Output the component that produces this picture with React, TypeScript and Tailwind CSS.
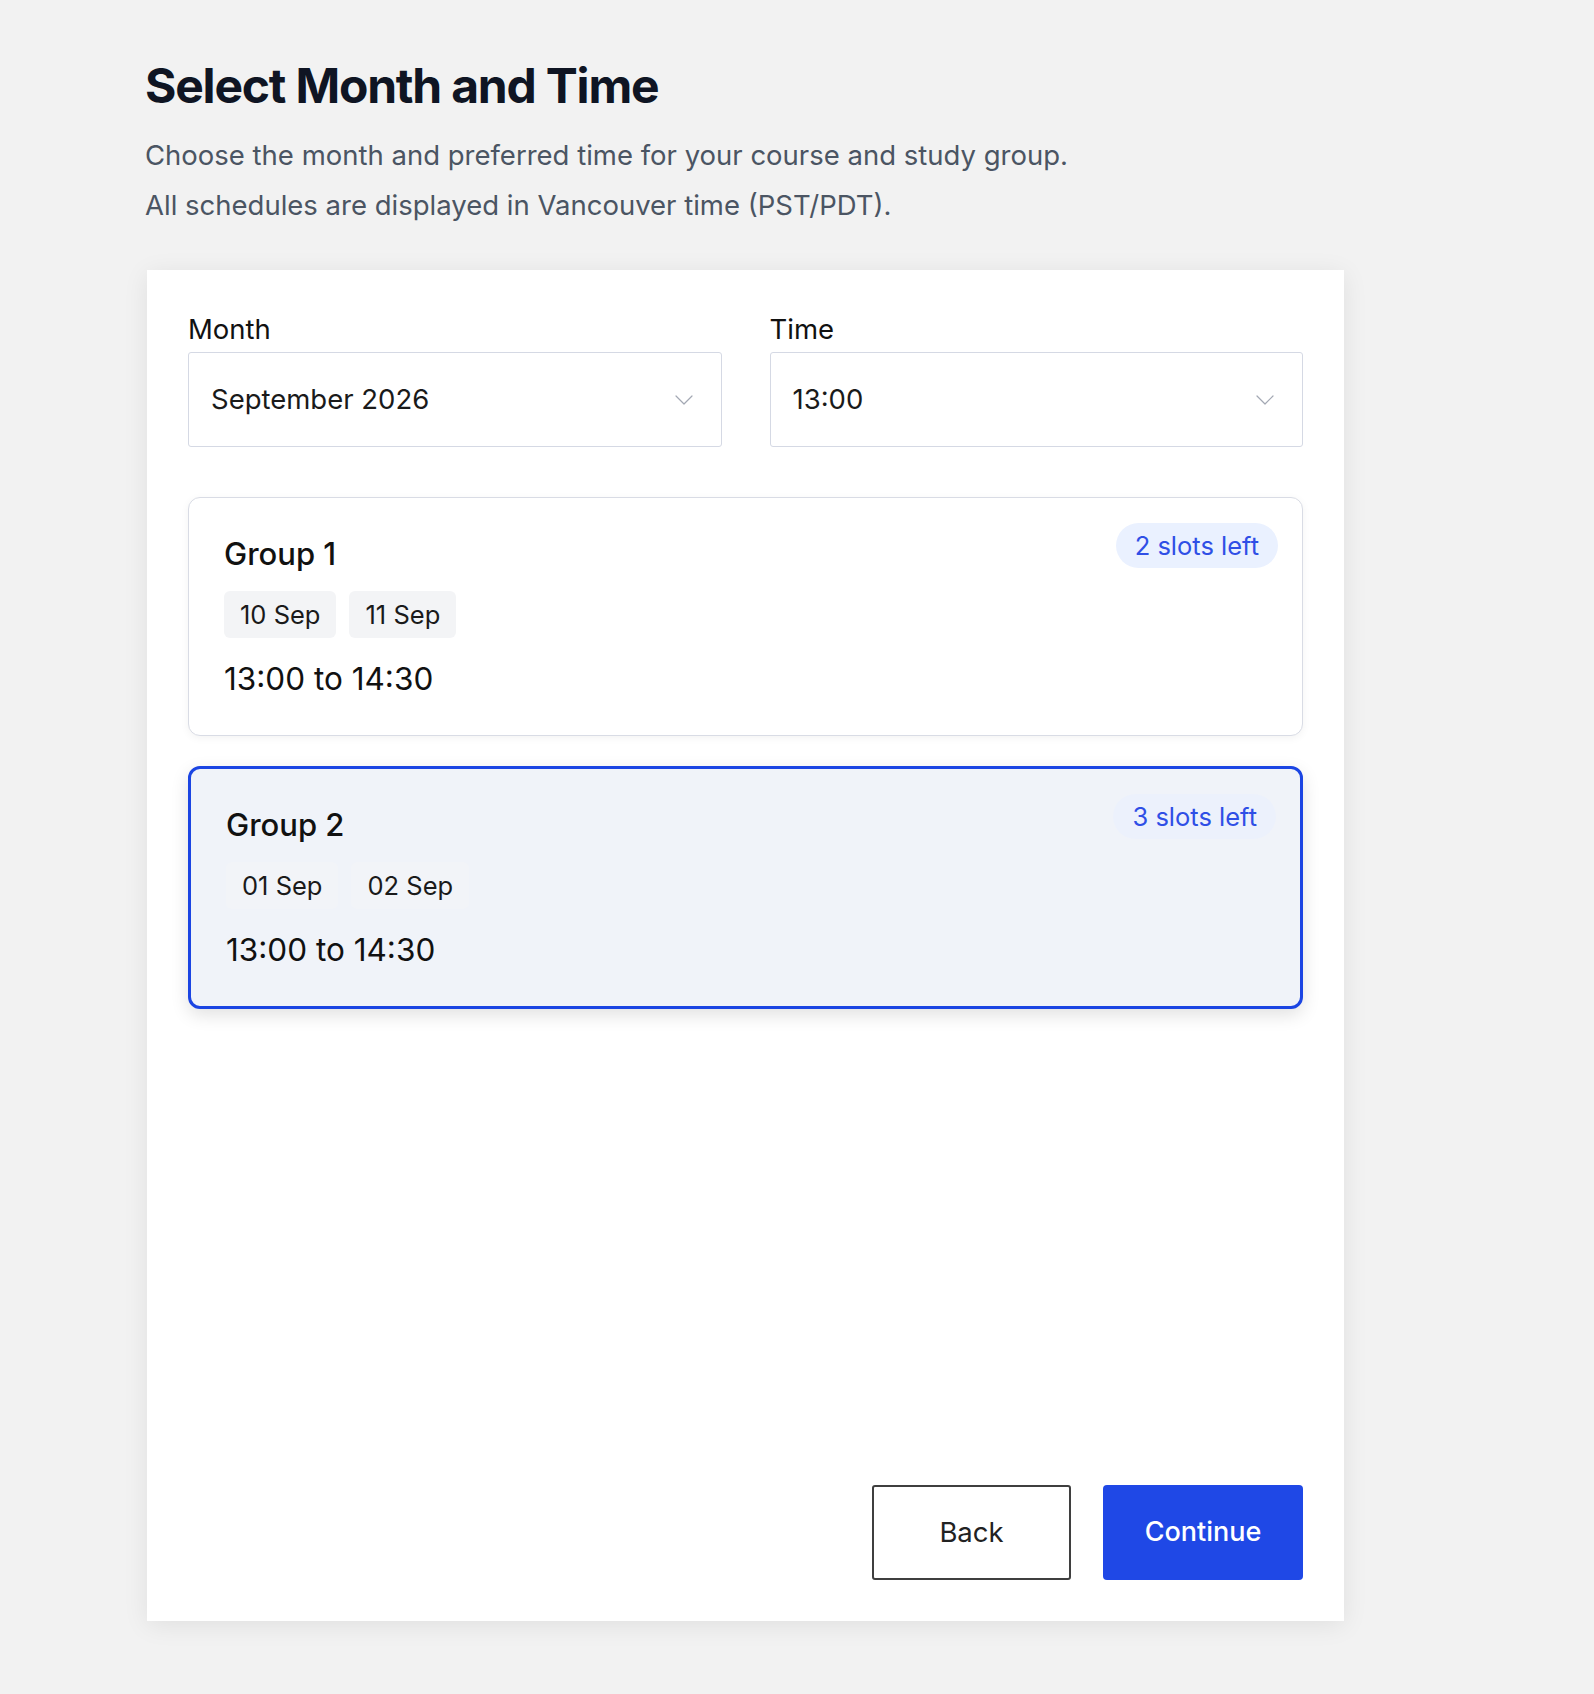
import { useState } from "react";

type Group = {
  id: number;
  name: string;
  dates: string[];
  time: string;
  slots: number;
};

const groups: Group[] = [
  { id: 1, name: "Group 1", dates: ["10 Sep", "11 Sep"], time: "13:00 to 14:30", slots: 2 },
  { id: 2, name: "Group 2", dates: ["01 Sep", "02 Sep"], time: "13:00 to 14:30", slots: 3 },
];

function Chevron() {
  return (
    <svg width="18" height="10" viewBox="0 0 18 10" fill="none" className="shrink-0">
      <path d="M1 1l8 8 8-8" stroke="#a3a8b3" strokeWidth="1.2" strokeLinecap="round" strokeLinejoin="round" />
    </svg>
  );
}

function SelectField({ label, value }: { label: string; value: string }) {
  return (
    <div className="flex flex-col">
      <span className="text-[27.5px] leading-8 text-[#111111]">{label}</span>
      <button className="mt-[7px] flex h-[95px] items-center justify-between rounded-[3px] border-[1.5px] border-[#d5d9e4] bg-white pl-[22px] pr-[28px] text-left">
        <span className="text-[27.5px] text-[#1a1a1a]">{value}</span>
        <Chevron />
      </button>
    </div>
  );
}

function GroupCard({ group, selected, onSelect }: { group: Group; selected: boolean; onSelect: () => void }) {
  return (
    <div
      onClick={onSelect}
      className={`relative cursor-pointer rounded-xl pl-[35px] pr-[24px] pt-[36px] pb-[36px] ${
        selected
          ? "border-[3px] border-[#1b45e3] bg-[#f0f3f9] shadow-[0_6px_18px_rgba(0,0,0,0.12)]"
          : "border-[1.5px] border-[#d9dce5] bg-white shadow-[0_2px_8px_rgba(0,0,0,0.05)]"
      }`}
    >
      <span
        className={`absolute top-[25px] right-[24px] rounded-full px-[19px] py-[6px] text-[25.5px] leading-[33px] text-[#2f4fe6] ${
          selected ? "bg-[#ecf1fc]" : "bg-[#eaf1ff]"
        }`}
      >
        {group.slots} slots left
      </span>
      <div className="text-[31px] leading-10 font-medium text-[#111111]">{group.name}</div>
      <div className="mt-[17px] flex gap-[13px]">
        {group.dates.map((d) => (
          <span
            key={d}
            className={`rounded-md px-[16px] py-[7px] text-[25.5px] leading-[33px] text-[#1a1a1a] ${
              selected ? "bg-[#f2f4f8]" : "bg-[#f3f4f6]"
            }`}
          >
            {d}
          </span>
        ))}
      </div>
      <div className="mt-[21px] text-[31.5px] leading-10 text-[#111111]">{group.time}</div>
    </div>
  );
}

export default function App() {
  const [selected, setSelected] = useState(2);

  return (
    <div className="min-h-screen bg-[#f2f2f2] font-['Inter',sans-serif]">
      <div className="pl-[145px] pt-[62px] pb-[72px]">
        <h1 className="text-5xl leading-[48px] font-bold tracking-tight text-[#0f1523]">Select Month and Time</h1>
        <p className="mt-5 text-[27.5px] leading-[50px] text-[#4b5563]">
          Choose the month and preferred time for your course and study group.
        </p>
        <p className="text-[27.5px] leading-[50px] text-[#4b5563]">
          All schedules are displayed in Vancouver time (PST/PDT).
        </p>

        <div className="mt-10 ml-[2px] flex h-[1351px] w-[1197px] flex-col bg-white px-[41px] pt-[43px] pb-[41px] shadow-[0_4px_24px_rgba(0,0,0,0.08)]">
          <div className="grid grid-cols-2 gap-12">
            <SelectField label="Month" value="September 2026" />
            <SelectField label="Time" value="13:00" />
          </div>

          <div className="mt-[50px] flex flex-col gap-[30px]">
            {groups.map((g) => (
              <GroupCard key={g.id} group={g} selected={selected === g.id} onSelect={() => setSelected(g.id)} />
            ))}
          </div>

          <div className="mt-auto flex justify-end gap-8">
            <button className="h-[95px] w-[199px] rounded-[3px] border-2 border-[#3f3f3f] bg-white text-[27.5px] text-[#222222]">
              Back
            </button>
            <button className="h-[95px] w-[200px] rounded-[4px] bg-[#1f48e6] text-[27px] font-medium text-white">
              Continue
            </button>
          </div>
        </div>
      </div>
    </div>
  );
}
